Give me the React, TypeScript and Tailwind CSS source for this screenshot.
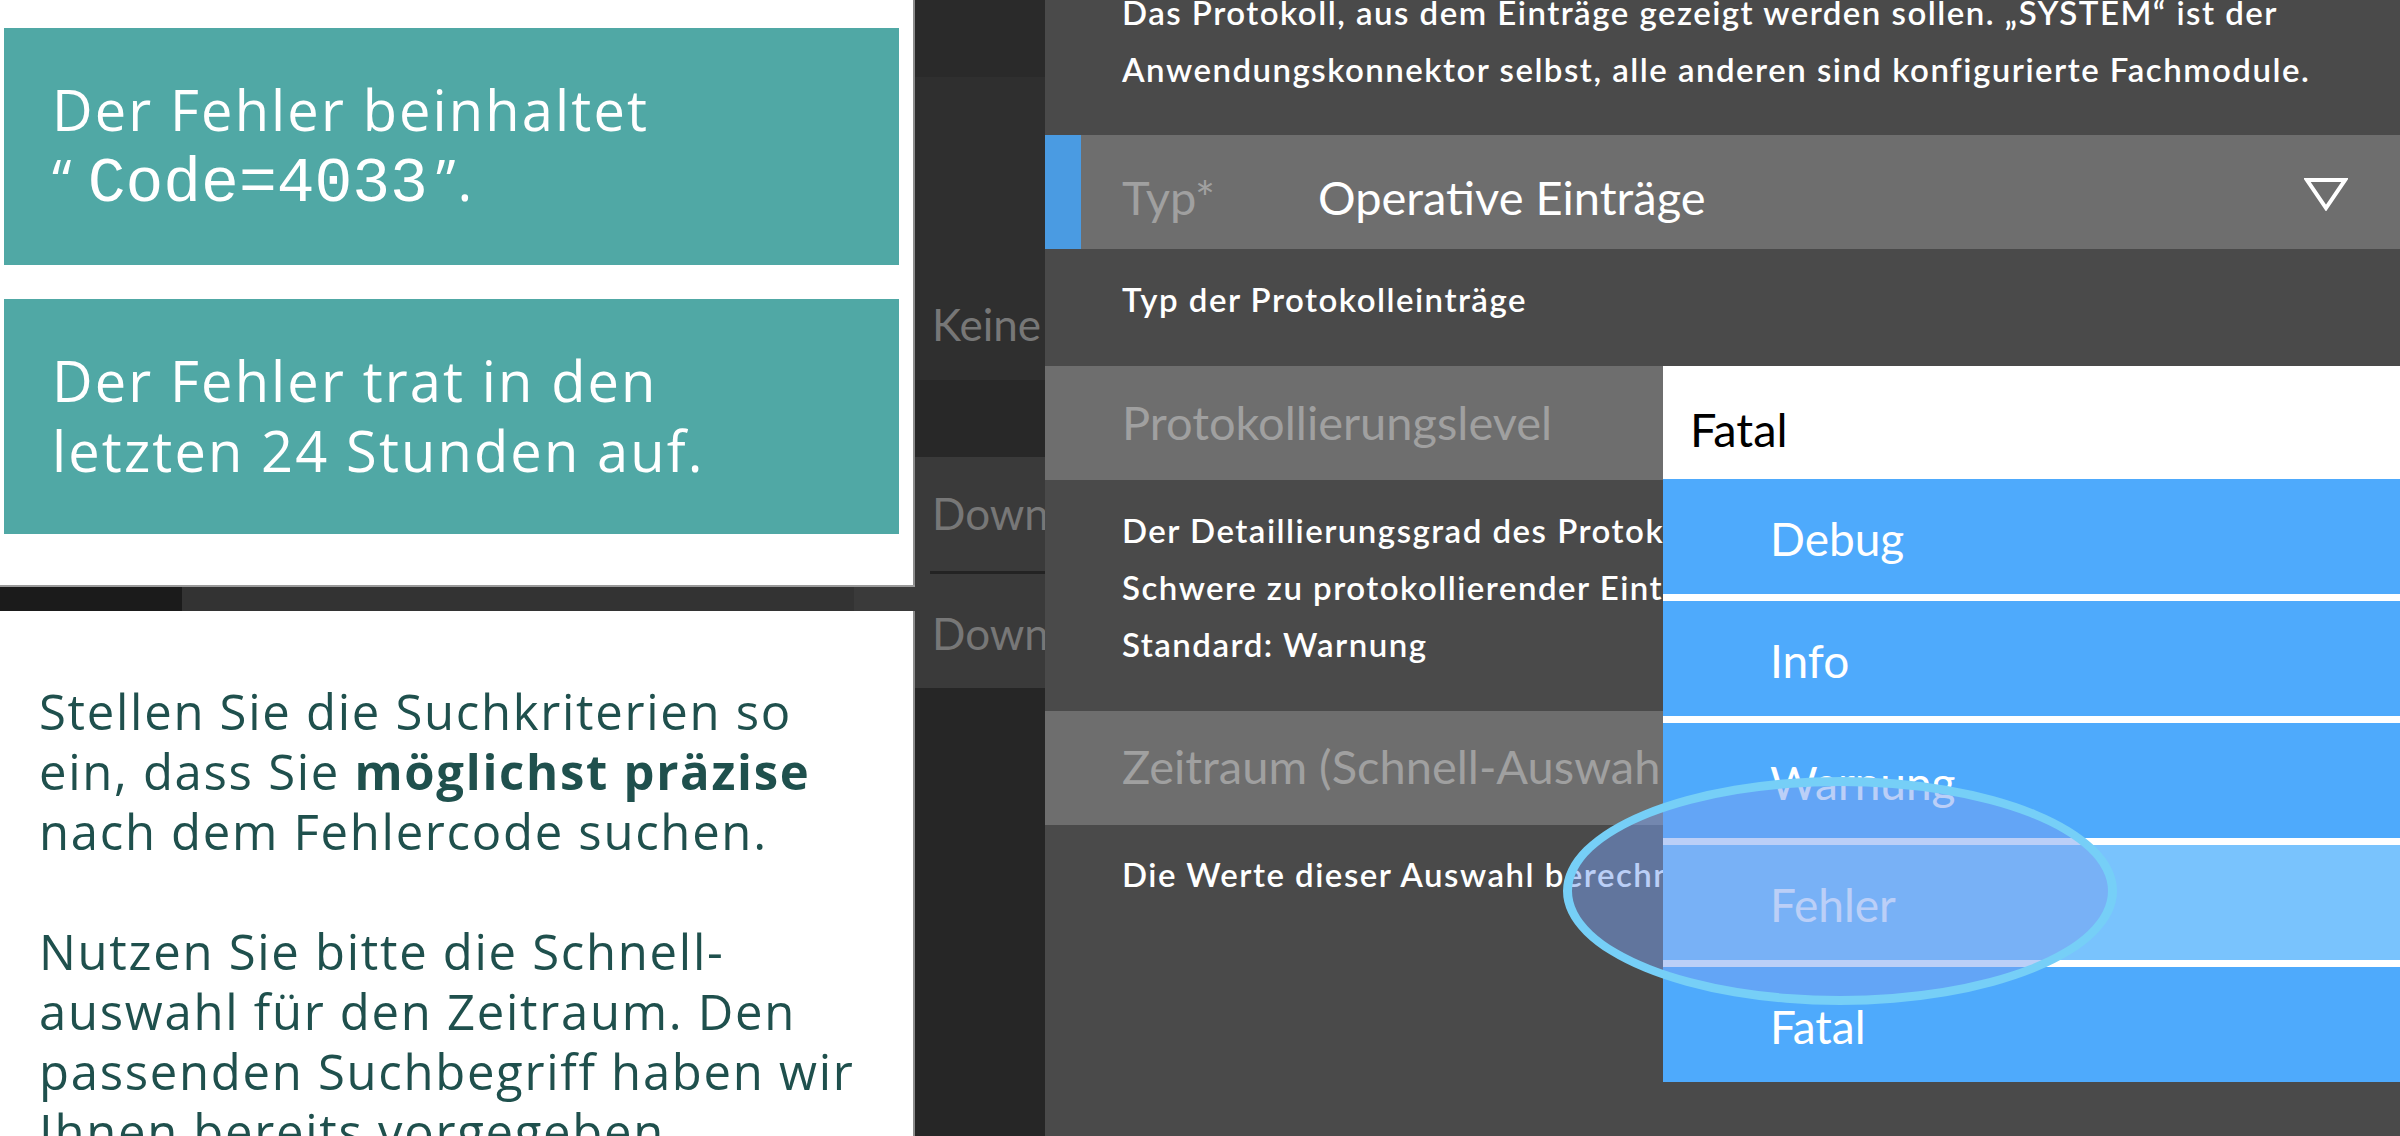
import React from "react";

const levels = [
  { name: "Debug", active: false },
  { name: "Info", active: false },
  { name: "Warnung", active: false },
  { name: "Fehler", active: true },
  { name: "Fatal", active: false },
];

function HintPanel() {
  return (
    <div className="flex w-[915px] shrink-0 flex-col font-['Open_Sans',sans-serif]">
      <div className="flex h-[585px] shrink-0 flex-col gap-[34px] border-r-2 border-[#8c8c8c] bg-white pl-[4px] pr-[14px] pt-[28px]">
        <div className="h-[237px] shrink-0 bg-[#50a8a5] pl-[48px] pt-[46px] text-[56px] leading-[70px] tracking-[0.038em] text-white">
          <p>Der Fehler beinhaltet</p>
          <p>
            “
            <span className="ml-[14px] mr-[8px] font-['Liberation_Mono',monospace] text-[63px] leading-[70px] tracking-normal">
              Code=4033
            </span>
            ”.
          </p>
        </div>
        <div className="h-[235px] shrink-0 bg-[#50a8a5] pl-[48px] pt-[46px] text-[56px] leading-[70px] tracking-[0.038em] text-white">
          <p>Der Fehler trat in den</p>
          <p>letzten 24 Stunden auf.</p>
        </div>
      </div>
      <div className="flex h-[26px] shrink-0 border-t-2 border-[#9a9a9a]">
        <div className="w-[182px] bg-[#1b1b1b]" />
        <div className="flex-1 bg-[#333333]" />
        <div className="w-[61px] bg-[#3a3a3a]" />
      </div>
      <div className="min-h-0 flex-1 overflow-hidden border-r-2 border-[#8c8c8c] bg-white pl-[39px] pt-[70px] text-[49px] leading-[60px] tracking-[0.035em] text-[#1f504d]">
        <p className="mb-[60px]">
          Stellen Sie die Suchkriterien so
          <br />
          ein, dass Sie <span className="font-bold">möglichst präzise</span>
          <br />
          nach dem Fehlercode suchen.
        </p>
        <p>
          Nutzen Sie bitte die Schnell-
          <br />
          auswahl für den Zeitraum. Den
          <br />
          passenden Suchbegriff haben wir
          <br />
          Ihnen bereits vorgegeben.
        </p>
      </div>
    </div>
  );
}

function SideColumn() {
  return (
    <div className="flex w-[130px] shrink-0 flex-col overflow-hidden whitespace-nowrap font-['Lato',sans-serif] text-[44px] leading-[44px] text-[#777777]">
      <div className="h-[77px] shrink-0 bg-[#2a2a2a]" />
      <div className="h-[303px] shrink-0 bg-[#2f2f2f] pl-[17px] pt-[225px]">Keine</div>
      <div className="h-[77px] shrink-0 bg-[#282828]" />
      <div className="flex h-[231px] shrink-0 flex-col bg-[#3a3a3a]">
        <div className="pl-[17px] pt-[34px]">Download</div>
        <div className="ml-[15px] mt-[36px] h-[3px] bg-[#232323]" />
        <div className="pl-[17px] pt-[37px]">Download</div>
      </div>
      <div className="flex-1 bg-[#262626]" />
    </div>
  );
}

function FieldRow({ label, pt }: { label: string; pt: string }) {
  return (
    <div className={`h-[114px] shrink-0 bg-[#6e6e6e] pl-[77px] text-[47px] leading-[47px] text-[#a0a0a0] ${pt}`}>
      {label}
    </div>
  );
}

function Description({ h, pt, children }: { h: string; pt: string; children: React.ReactNode }) {
  return (
    <div
      className={`${h} ${pt} shrink-0 overflow-hidden whitespace-nowrap pl-[77px] text-[33px] font-semibold leading-[57px] tracking-[0.045em] text-white`}
    >
      {children}
    </div>
  );
}

function MainPanel() {
  return (
    <div className="relative flex flex-1 flex-col overflow-hidden bg-[#4a4a4a] font-['Lato',sans-serif]">
      <div className="flex h-[135px] shrink-0 flex-col pl-[77px] text-[33px] font-semibold leading-[57px] tracking-[0.045em] text-white">
        <div className="-mt-[16px]">
          <p>Das Protokoll, aus dem Einträge gezeigt werden sollen. „SYSTEM“ ist der</p>
          <p>Anwendungskonnektor selbst, alle anderen sind konfigurierte Fachmodule.</p>
        </div>
      </div>

      <div className="flex h-[114px] shrink-0 bg-[#6e6e6e]">
        <div className="w-[36px] bg-[#4a9be2]" />
        <div className="w-[237px] pl-[41px] pt-[39px] text-[47px] leading-[47px] text-[#a0a0a0]">Typ*</div>
        <div className="pt-[39px] text-[47px] leading-[47px] text-white">Operative Einträge</div>
        <svg className="ml-auto mr-[52px] mt-[42px]" width="44" height="34" viewBox="0 0 44 34">
          <polygon points="3,3 41,3 22,31" fill="none" stroke="white" strokeWidth="4" />
        </svg>
      </div>

      <Description h="h-[117px]" pt="pt-[22px]">
        Typ der Protokolleinträge
      </Description>

      <FieldRow label="Protokollierungslevel" pt="pt-[33px]" />

      <Description h="h-[231px]" pt="pt-[22px]">
        <p>Der Detaillierungsgrad des Protokolls, d. h. die minimale</p>
        <p>Schwere zu protokollierender Einträge.</p>
        <p>Standard: Warnung</p>
      </Description>

      <FieldRow label="Zeitraum (Schnell-Auswahl)" pt="pt-[32px]" />

      <Description h="h-[200px]" pt="pt-[21px]">
        Die Werte dieser Auswahl berechnen sich relativ zum aktuellen Zeitpunkt.
      </Description>

      {/* dropdown of the Protokollierungslevel field */}
      <div className="absolute left-[618px] right-0 top-[366px] flex flex-col bg-white">
        <div className="h-[113px] pl-[27px] pt-[40px] text-[47px] leading-[47px] text-black">Fatal</div>
        <div className="flex flex-col gap-[7px]">
          {levels.map((l) => (
            <div
              key={l.name}
              className={`${l.active ? "bg-[#79c3fd]" : "bg-[#4eaafc]"} h-[115px] pl-[107px] pt-[37px] text-[46px] leading-[46px] text-white`}
            >
              {l.name}
            </div>
          ))}
        </div>
      </div>

      {/* highlight marker */}
      <div className="absolute left-[518px] top-[777px] h-[228px] w-[554px] rounded-[50%] border-[9px] border-[#76cff7] bg-[rgba(120,160,240,0.5)]" />
    </div>
  );
}

export default function App() {
  return (
    <div className="flex h-[1136px] w-[2400px] overflow-hidden bg-[#4a4a4a]">
      <HintPanel />
      <SideColumn />
      <MainPanel />
    </div>
  );
}
